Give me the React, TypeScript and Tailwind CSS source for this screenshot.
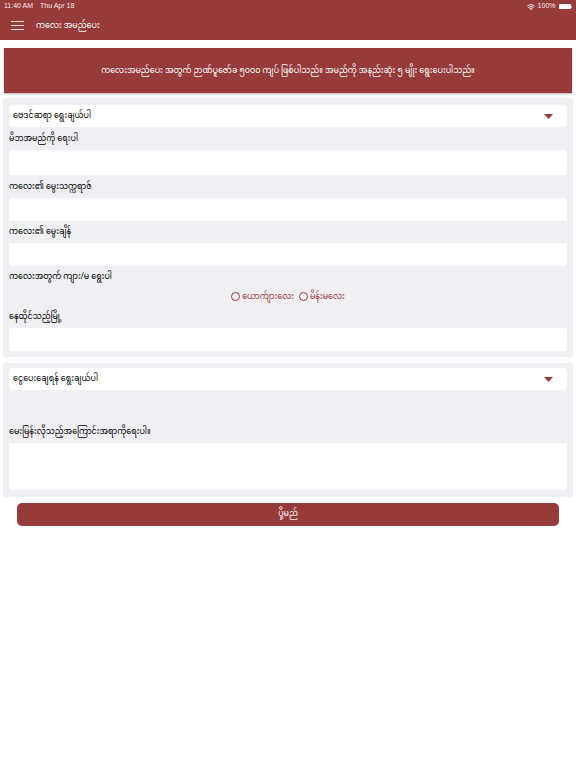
import { Wifi } from 'lucide-react';

const font = { fontFamily: '"Noto Sans Myanmar", "Noto Sans", "DejaVu Sans", sans-serif' };

function Caret() {
  return (
    <svg width="9" height="5" viewBox="0 0 9 5" className="block">
      <path d="M0 0h9L4.5 5z" fill="#963a3a" />
    </svg>
  );
}

function SelectRow({ label }: { label: string }) {
  return (
    <div className="flex h-[22px] items-center justify-between rounded-[4px] bg-white pl-1 pr-[14px]">
      <span className="text-[8px] leading-[12px] text-black">{label}</span>
      <Caret />
    </div>
  );
}

function Field({ label, labelH, inputH }: { label: string; labelH: string; inputH: string }) {
  return (
    <div>
      <div className={`flex items-center text-[8px] text-black ${labelH}`}>{label}</div>
      <div className={`rounded-[2px] bg-white ${inputH}`} />
    </div>
  );
}

export default function App() {
  return (
    <div className="min-h-[768px] bg-white" style={font}>
      <header className="h-[39.5px] bg-[#963a3a] text-white">
        <div className="flex h-[12px] items-center justify-between pl-1 pr-1 pt-[1px] font-['Liberation_Sans'] text-[7px] text-[#f8eeee]">
          <div className="flex gap-[7px]">
            <span>11:40 AM</span>
            <span>Thu Apr 18</span>
          </div>
          <div className="flex items-center gap-[3px]">
            <Wifi size={8} strokeWidth={3} />
            <span>100%</span>
            <span className="flex items-center gap-[0.5px]">
              <span className="h-[5px] w-[12px] rounded-[1px] bg-white" />
              <span className="h-[2px] w-[1px] bg-[#d9b3b3]" />
            </span>
          </div>
        </div>
        <div className="flex h-[27px] items-center pl-[11px]">
          <div className="flex w-[13px] flex-col gap-[3px]">
            <span className="h-[1px] bg-[#f3e3e3]" />
            <span className="h-[1px] bg-[#f3e3e3]" />
            <span className="h-[1px] bg-[#f3e3e3]" />
          </div>
          <span className="ml-3 text-[8px] leading-[12px]">ကလေး အမည်ပေး</span>
        </div>
      </header>

      <div className="mx-1 mt-[8.5px] flex h-[45px] items-center justify-center bg-[#963a3a] text-[8px] text-white shadow-[0_1px_2px_rgba(0,0,0,0.3)]">
        ကလေးအမည်ပေး အတွက်  ဉာဏ်ပူဇော်ခ ၅၀၀၀ ကျပ် ဖြစ်ပါသည်။ အမည်ကို အနည်းဆုံး ၅ မျိုး ရွေးပေးပါသည်။
      </div>

      <section className="mx-[3px] mt-[5px] h-[259px] rounded-[2px] bg-[#efeff4] px-[6px] pt-[7px]">
        <SelectRow label="ဗေဒင်ဆရာ ရွေးချယ်ပါ" />
        <Field label="မိဘအမည်ကို ရေးပါ" labelH="h-[23px]" inputH="h-[25px]" />
        <Field label="ကလေး၏ မွေးသက္ကရာဇ်" labelH="h-[23px]" inputH="h-[23px]" />
        <Field label="ကလေး၏ မွေးချိန်" labelH="h-[22px]" inputH="h-[23px]" />
        <div className="flex h-[21px] items-center text-[8px] text-black">ကလေးအတွက် ကျား/မ ရွေးပါ</div>
        <div className="flex h-[19px] items-center justify-center gap-[5px] text-[8px] text-[#963a3a]">
          <span className="flex items-center gap-[2px]">
            <span className="size-[9px] rounded-full border-[1.5px] border-[#963a3a]" />
            ယောက်ျားလေး
          </span>
          <span className="flex items-center gap-[2px]">
            <span className="size-[9px] rounded-full border-[1.5px] border-[#963a3a]" />
            မိန်းမလေး
          </span>
        </div>
        <Field label="နေထိုင်သည့်မြို့" labelH="h-[22px]" inputH="h-[23px]" />
      </section>

      <section className="mx-[3px] mt-[6px] h-[134px] rounded-[2px] bg-[#efeff4] px-[6px] pt-[5px]">
        <SelectRow label="ငွေပေးချေရန် ရွေးချယ်ပါ" />
        <div className="flex h-[53px] items-end pb-[5px] text-[8px] leading-[12px] text-black">မေးမြန်းလိုသည့်အကြောင်းအရာကိုရေးပါ။</div>
        <div className="h-[47px] rounded-[2px] bg-white" />
      </section>

      <button className="mx-[17px] mt-[6px] flex h-[22.5px] w-[542px] items-center justify-center rounded-[5px] bg-[#963a3a] text-[8px] text-white">
        ပို့မည်
      </button>
    </div>
  );
}
